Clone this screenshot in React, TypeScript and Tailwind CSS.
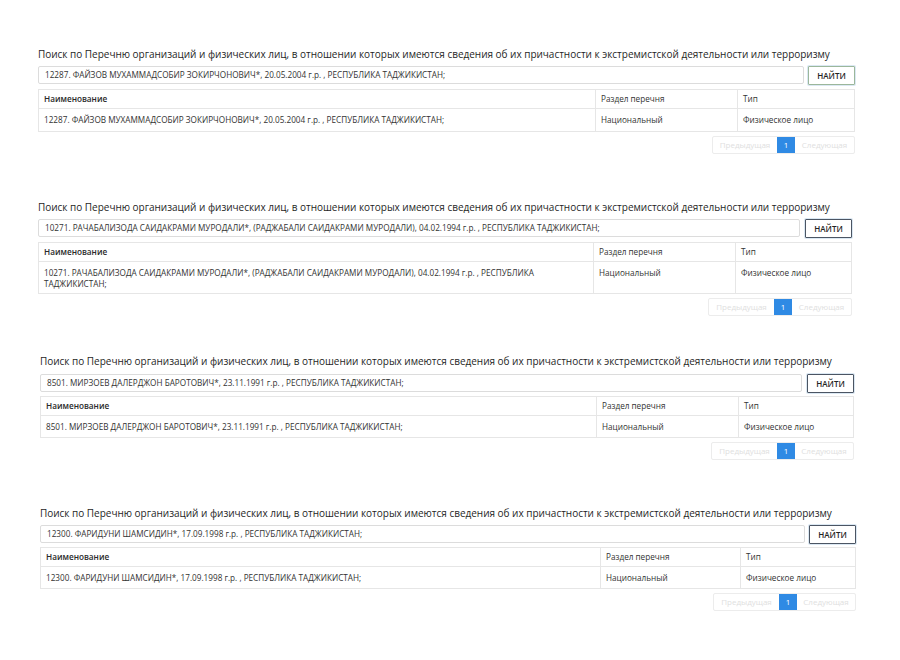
import React from 'react';

interface Block {
  query: string;
  name: string;
  wrap: string;
  box: string;
  gapTitle: string;
  gapTable: string;
  rowH: string;
  col1: string;
  col2: string;
  btn: string;
  prev: string;
  next: string;
}

const TITLE =
  'Поиск по Перечню организаций и физических лиц, в отношении которых имеются сведения об их причастности к экстремистской деятельности или терроризму';

const blocks: Block[] = [
  {
    query: '12287. ФАЙЗОВ МУХАММАДСОБИР ЗОКИРЧОНОВИЧ*, 20.05.2004 г.р. , РЕСПУБЛИКА ТАДЖИКИСТАН;',
    name: '12287. ФАЙЗОВ МУХАММАДСОБИР ЗОКИРЧОНОВИЧ*, 20.05.2004 г.р. , РЕСПУБЛИКА ТАДЖИКИСТАН;',
    wrap: 'mt-[47px] ml-[38px] w-[817px]',
    box: 'gap-[4px]',
    gapTitle: 'mt-[5px]',
    gapTable: 'mt-[4px]',
    rowH: 'h-[22px]',
    col1: 'w-[557px]',
    col2: 'w-[142px]',
    btn: 'border-[#9bb79b] shadow-[0_0_0_1px_#dbe8f3]',
    prev: 'w-[64px]',
    next: 'w-[59px]',
  },
  {
    query: '10271. РАЧАБАЛИЗОДА САИДАКРАМИ МУРОДАЛИ*,  (РАДЖАБАЛИ САИДАКРАМИ МУРОДАЛИ), 04.02.1994 г.р. , РЕСПУБЛИКА ТАДЖИКИСТАН;',
    name: '10271. РАЧАБАЛИЗОДА САИДАКРАМИ МУРОДАЛИ*, (РАДЖАБАЛИ САИДАКРАМИ МУРОДАЛИ), 04.02.1994 г.р. , РЕСПУБЛИКА ТАДЖИКИСТАН;',
    wrap: 'mt-[46px] ml-[38px] w-[814px]',
    box: 'gap-[5px]',
    gapTitle: 'mt-[5px]',
    gapTable: 'mt-[4px]',
    rowH: 'h-[31px]',
    col1: 'w-[555px]',
    col2: 'w-[142px]',
    btn: 'border-[#4b5563] shadow-[0_0_0_1px_#dbe8f3]',
    prev: 'w-[65px]',
    next: 'w-[59px]',
  },
  {
    query: '8501. МИРЗОЕВ ДАЛЕРДЖОН БАРОТОВИЧ*, 23.11.1991 г.р. , РЕСПУБЛИКА ТАДЖИКИСТАН;',
    name: '8501. МИРЗОЕВ ДАЛЕРДЖОН БАРОТОВИЧ*, 23.11.1991 г.р. , РЕСПУБЛИКА ТАДЖИКИСТАН;',
    wrap: 'mt-[38px] ml-[40px] w-[814px]',
    box: 'gap-[5px]',
    gapTitle: 'mt-[6px]',
    gapTable: 'mt-[3px]',
    rowH: 'h-[21px]',
    col1: 'w-[556px]',
    col2: 'w-[142px]',
    btn: 'border-[#4b5563] shadow-[0_0_0_1px_#dbe8f3]',
    prev: 'w-[65px]',
    next: 'w-[58px]',
  },
  {
    query: '12300. ФАРИДУНИ ШАМСИДИН*, 17.09.1998 г.р. , РЕСПУБЛИКА ТАДЖИКИСТАН;',
    name: '12300. ФАРИДУНИ ШАМСИДИН*, 17.09.1998 г.р. , РЕСПУБЛИКА ТАДЖИКИСТАН;',
    wrap: 'mt-[46px] ml-[40px] w-[816px]',
    box: 'gap-[4px]',
    gapTitle: 'mt-[5px]',
    gapTable: 'mt-[3px]',
    rowH: 'h-[21px]',
    col1: 'w-[560px]',
    col2: 'w-[140px]',
    btn: 'border-[#4b5563] shadow-[0_0_0_1px_#dbe8f3]',
    prev: 'w-[65px]',
    next: 'w-[58px]',
  },
];

const SearchBlock: React.FC<{ b: Block }> = ({ b }) => (
  <section className={`flex flex-col ${b.wrap}`}>
    <h2 className="text-[10px] leading-[14px] text-[#1f1f1f] whitespace-nowrap tracking-[-0.02px]">{TITLE}</h2>

    <div className={`flex ${b.box} ${b.gapTitle} h-[19px]`}>
      <div className="flex-1 flex items-center border border-[#dcdcdc] rounded-[2px] px-[6px] h-[18px] text-[8.2px] text-[#333] whitespace-nowrap overflow-hidden">
        {b.query}
      </div>
      <button
        className={`w-[47px] h-[19px] border-[1.5px] rounded-[1px] bg-white text-[8px] font-semibold text-[#222] ${b.btn}`}
      >
        НАЙТИ
      </button>
    </div>

    <div className={`${b.gapTable} border border-[#e6e6e6] text-[8.2px] text-[#333]`}>
      <div className="flex h-[19px] border-b border-[#e6e6e6]">
        <div className={`${b.col1} px-[5px] flex items-center border-r border-[#e6e6e6] font-semibold text-[#2a2a2a]`}>Наименование</div>
        <div className={`${b.col2} px-[5px] flex items-center border-r border-[#e6e6e6]`}>Раздел перечня</div>
        <div className="flex-1 px-[5px] flex items-center">Тип</div>
      </div>
      <div className={`flex ${b.rowH}`}>
        <div className={`${b.col1} px-[5px] pt-[5px] leading-[11px] border-r border-[#e6e6e6]`}>{b.name}</div>
        <div className={`${b.col2} px-[5px] pt-[5px] leading-[11px] border-r border-[#e6e6e6]`}>Национальный</div>
        <div className="flex-1 px-[5px] pt-[5px] leading-[11px]">Физическое лицо</div>
      </div>
    </div>

    <div className="mt-[4px] flex justify-end">
      <div className="flex h-[18px] border border-[#ececec] rounded-[2px] text-[8px]">
        <span className={`${b.prev} flex items-center justify-center text-[#e0e0e0] overflow-hidden whitespace-nowrap`}>Предыдущая</span>
        <span className="w-[18px] flex items-center justify-center bg-[#2f8ae4] text-white">1</span>
        <span className={`${b.next} flex items-center justify-center text-[#e0e0e0] overflow-hidden whitespace-nowrap`}>Следующая</span>
      </div>
    </div>
  </section>
);

export default function App() {
  return (
    <div className="w-[900px] h-[660px] bg-white flex flex-col font-['Open_Sans',sans-serif]">
      {blocks.map((b, i) => (
        <SearchBlock key={i} b={b} />
      ))}
    </div>
  );
}
